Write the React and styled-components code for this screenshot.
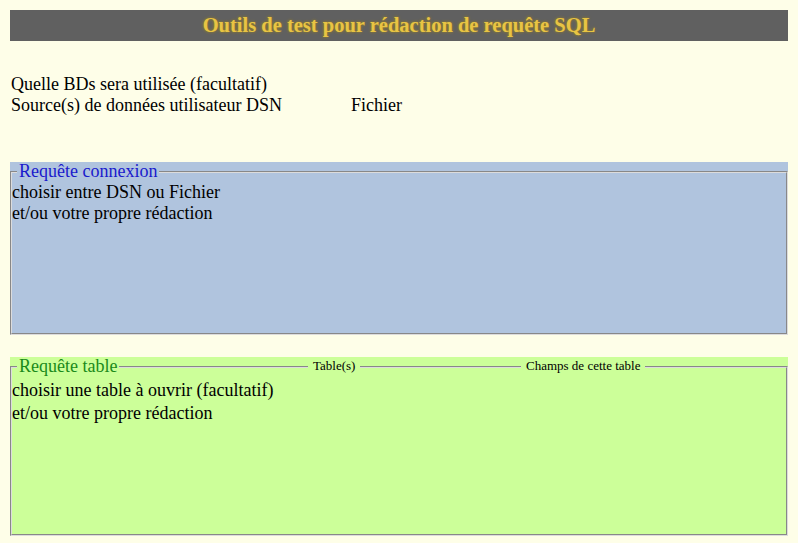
import React from 'react';
import styled, { createGlobalStyle } from 'styled-components';

const GlobalStyle = createGlobalStyle`
  body {
    margin: 10px;
    background: #fefee8;
    font-family: "Liberation Serif", "Times New Roman", serif;
    font-size: 18px;
    color: #000;
  }
`;

const TitleBar = styled.div`
  height: 31px;
  background: #606060;
  display: flex;
  align-items: center;
  justify-content: center;
  font-size: 20.5px;
  font-weight: bold;
  color: #e8c444;
  text-shadow: 0 0 3px #a88a10;
  margin-bottom: 33px;
`;

const Intro = styled.div`
  line-height: 21px;
  padding-left: 1px;
  margin-bottom: 46px;
`;

const SourceRow = styled.div`
  display: flex;
`;

const SourceLabel = styled.span`
  width: 340px;
`;

const Panel = styled.div`
  background: ${p => p.$bg};
  margin-bottom: ${p => p.$gap || 0}px;
  position: relative;
`;

const Fieldset = styled.fieldset`
  margin: 0;
  padding: 0;
  border: 2px groove #dcdcdc;
  min-width: 0;
`;

const Legend = styled.legend`
  margin-left: 5px;
  padding: 0 2px;
  font-size: 18px;
  line-height: 19px;
  color: ${p => p.$color};
`;

const Content = styled.div`
  height: ${p => p.$h}px;
  line-height: ${p => p.$lh}px;
  font-size: 18px;
  padding-top: ${p => p.$pt}px;
  box-sizing: border-box;
`;

const SubLabel = styled.span`
  position: absolute;
  top: 2px;
  left: ${p => p.$left}px;
  padding: 0 5px;
  background: #ccff99;
  font-size: 13px;
  line-height: 14px;
`;

export default function App() {
  return (
    <>
      <GlobalStyle />
      <TitleBar>Outils de test pour rédaction de requête SQL</TitleBar>
      <Intro>
        <div>Quelle BDs sera utilisée (facultatif)</div>
        <SourceRow>
          <SourceLabel>Source(s) de données utilisateur DSN</SourceLabel>
          <span>Fichier</span>
        </SourceRow>
      </Intro>
      <Panel $bg="#b0c4de" $gap={22}>
        <Fieldset>
          <Legend $color="#1a1acc">Requête connexion</Legend>
          <Content $h={152} $lh={21} $pt={1}>
            choisir entre DSN ou Fichier
            <br />
            et/ou votre propre rédaction
          </Content>
        </Fieldset>
      </Panel>
      <Panel $bg="#ccff99">
        <Fieldset>
          <Legend $color="#1a8a1a">Requête table</Legend>
          <Content $h={158} $lh={23} $pt={3}>
            choisir une table à ouvrir (facultatif)
            <br />
            et/ou votre propre rédaction
          </Content>
        </Fieldset>
        <SubLabel $left={298}>Table(s)</SubLabel>
        <SubLabel $left={511}>Champs de cette table</SubLabel>
      </Panel>
    </>
  );
}
